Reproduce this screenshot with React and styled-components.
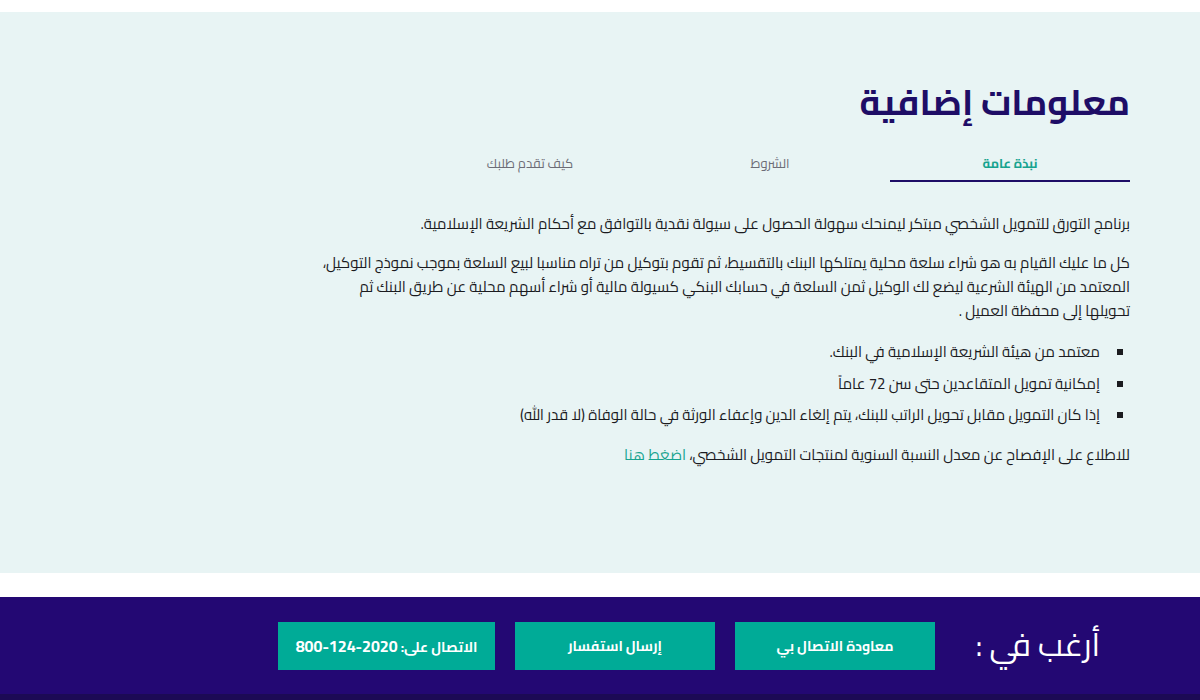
import React, { useState } from "react";
import styled, { createGlobalStyle } from "styled-components";

const Global = createGlobalStyle`
  html, body { margin: 0; padding: 0; background: #ffffff; }
  body { font-family: "Cairo", "DejaVu Sans", sans-serif; }
  * { box-sizing: border-box; }
`;

const Page = styled.div`
  direction: rtl;
  padding-top: 12px;
  background: #ffffff;
`;

const InfoPanel = styled.section`
  background: #e8f4f4;
  height: 561px;
  padding: 68px 70px 0 0;
`;

const Content = styled.div`
  width: 814px;
`;

const Title = styled.h2`
  margin: 0;
  font-size: 36px;
  line-height: 44px;
  font-weight: 700;
  color: #1e0d66;
`;

const Tabs = styled.div`
  display: flex;
  margin-top: 20px;
`;

const Tab = styled.button`
  width: 240px;
  height: 38px;
  border: none;
  background: transparent;
  font-family: inherit;
  font-size: 13px;
  font-weight: ${(p) => (p.$active ? 700 : 400)};
  color: ${(p) => (p.$active ? "#17a38f" : "#6c6c76")};
  border-bottom: 2px solid ${(p) => (p.$active ? "#1e0d66" : "transparent")};
  padding: 2px 0 0;
  cursor: pointer;
`;

const Body = styled.div`
  margin-top: 30px;
  font-size: 15px;
  color: #1b1b1f;
`;

const Para = styled.p`
  margin: 0 0 ${(p) => p.$gap ?? 17}px;
  line-height: 24px;
`;

const List = styled.ul`
  list-style: none;
  margin: 0 0 16px;
  padding: 0;
`;

const Item = styled.li`
  position: relative;
  padding-right: 30px;
  line-height: 24px;
  margin-bottom: 7.5px;
  &::before {
    content: "";
    position: absolute;
    right: 7px;
    top: 9px;
    width: 6px;
    height: 6px;
    background: #1b1b1f;
  }
`;

const Link = styled.a`
  color: #17a38f;
  text-decoration: none;
`;

const Gap = styled.div`
  height: 24px;
  background: #ffffff;
`;

const Footer = styled.footer`
  background: #230873;
  height: 103px;
  border-bottom: 6px solid #1c0a55;
  display: flex;
  align-items: center;
  padding-right: 100px;
  gap: 20px;
`;

const Lead = styled.div`
  width: 145px;
  color: #ffffff;
  font-size: 32px;
  font-weight: 400;
  line-height: 40px;
  padding-bottom: 4px;
`;

const Action = styled.button`
  width: ${(p) => p.$w || 200}px;
  height: 48px;
  border: none;
  background: #00ab97;
  color: #ffffff;
  font-family: inherit;
  font-size: 14px;
  font-weight: 700;
  white-space: nowrap;
  cursor: pointer;
`;

const Num = styled.span`
  direction: ltr;
  unicode-bidi: isolate;
  font-size: 16px;
  letter-spacing: 0.3px;
`;

const tabs = ["نبذة عامة", "الشروط", "كيف تقدم طلبك"];

export default function App() {
  const [active, setActive] = useState(0);
  return (
    <>
      <Global />
      <Page>
        <InfoPanel>
          <Content>
            <Title>معلومات إضافية</Title>
            <Tabs>
              {tabs.map((t, i) => (
                <Tab key={t} $active={i === active} onClick={() => setActive(i)}>
                  {t}
                </Tab>
              ))}
            </Tabs>
            <Body>
              <Para $gap={15}>
                برنامج التورق للتمويل الشخصي مبتكر ليمنحك سهولة الحصول على سيولة نقدية بالتوافق مع أحكام الشريعة الإسلامية.
              </Para>
              <Para>
                كل ما عليك القيام به هو شراء سلعة محلية يمتلكها البنك بالتقسيط، ثم تقوم بتوكيل من تراه مناسبا لبيع السلعة بموجب نموذج التوكيل، المعتمد من الهيئة الشرعية ليضع لك الوكيل ثمن السلعة في حسابك البنكي كسيولة مالية أو شراء أسهم محلية عن طريق البنك ثم تحويلها إلى محفظة العميل .
              </Para>
              <List>
                <Item>معتمد من هيئة الشريعة الإسلامية في البنك.</Item>
                <Item>إمكانية تمويل المتقاعدين حتى سن 72 عاماً</Item>
                <Item>إذا كان التمويل مقابل تحويل الراتب للبنك، يتم إلغاء الدين وإعفاء الورثة في حالة الوفاة (لا قدر الله)</Item>
              </List>
              <Para>
                للاطلاع على الإفصاح عن معدل النسبة السنوية لمنتجات التمويل الشخصي، <Link href="#">اضغط هنا</Link>
              </Para>
            </Body>
          </Content>
        </InfoPanel>
        <Gap />
        <Footer>
          <Lead>أرغب في :</Lead>
          <Action>معاودة الاتصال بي</Action>
          <Action>إرسال استفسار</Action>
          <Action $w={217}>
            الاتصال على: <Num>800-124-2020</Num>
          </Action>
        </Footer>
      </Page>
    </>
  );
}
